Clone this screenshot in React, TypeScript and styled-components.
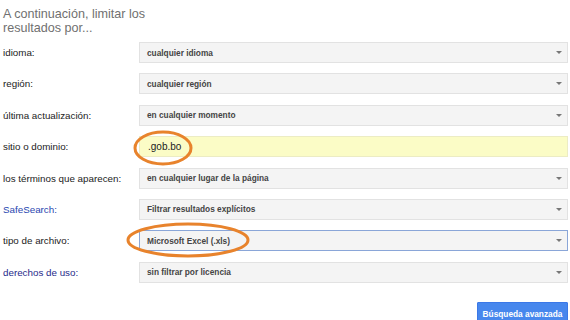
import { FC } from 'react'
import styled, { createGlobalStyle } from 'styled-components'

const GlobalStyle = createGlobalStyle`
  html, body {
    margin: 0;
    padding: 0;
    background: #fff;
    overflow: hidden;
  }
  body {
    font-family: "Liberation Sans", Arial, sans-serif;
  }
`

// Page wrapper
const Page = styled.div`
  width: 570px;
  height: 320px;
  padding: 8px 2px 0 3px;
  box-sizing: border-box;
`

const Heading = styled.h2`
  margin: 0 0 7px 0;
  width: 150px;
  font-size: 12.6px;
  line-height: 13.5px;
  font-weight: normal;
  color: #707070;
`

const Form = styled.div`
  display: grid;
  grid-template-columns: 136px 1fr;
  row-gap: 10.4px;
  align-items: center;
`

const Label = styled.div<{ $link?: boolean; $dark?: boolean }>`
  font-size: 9.8px;
  color: ${p => (p.$link ? (p.$dark ? '#1f2a8a' : '#2a47b0') : '#222')};
`

const Field = styled.div`
  position: relative;
`

const Select = styled.div<{ $focused?: boolean }>`
  height: 21px;
  box-sizing: border-box;
  display: flex;
  align-items: center;
  justify-content: space-between;
  padding: 0 5px 0 7px;
  background: #f4f4f4;
  border: 1px solid ${p => (p.$focused ? '#8aa6d8' : '#e2e2e2')};
  font-size: 8.3px;
  font-weight: bold;
  color: #444;
`

const Arrow = styled.span`
  width: 0;
  height: 0;
  border-left: 3px solid transparent;
  border-right: 3px solid transparent;
  border-top: 3px solid #777;
`

const TextInput = styled.div`
  height: 21px;
  box-sizing: border-box;
  display: flex;
  align-items: center;
  padding: 0 8px;
  background: #fbfcc6;
  border: 1px solid #ececc4;
  font-size: 10px;
  color: #222;
`

// Hand-drawn orange ring laid over a field
const Ring = styled.svg<{ $left: number; $top: number }>`
  position: absolute;
  left: ${p => p.$left}px;
  top: ${p => p.$top}px;
  overflow: visible;
  pointer-events: none;
`

const Footer = styled.div`
  display: flex;
  justify-content: flex-end;
  margin-top: 19px;
`

const Button = styled.button`
  height: 24px;
  width: 91px;
  padding: 0;
  border: 1px solid #3b78e7;
  background: #4787ed;
  color: #fff;
  font-family: "Liberation Sans", Arial, sans-serif;
  font-size: 8.3px;
  font-weight: bold;
  border-radius: 1px;
`

const Annotation: FC<{ left: number; top: number; rx: number; ry: number }> = ({ left, top, rx, ry }) => (
  <Ring $left={left} $top={top} width={rx * 2 + 4} height={ry * 2 + 4}>
    <ellipse cx={rx + 2} cy={ry + 2} rx={rx} ry={ry} fill="none" stroke="#e8832c" strokeWidth="3" />
  </Ring>
)

const rows = [
  { label: 'idioma:', value: 'cualquier idioma' },
  { label: 'región:', value: 'cualquier región' },
  { label: 'última actualización:', value: 'en cualquier momento' },
]

const rows2 = [
  { label: 'los términos que aparecen:', value: 'en cualquier lugar de la página' },
]

const App = () => {
  return (
    <Page>
      <GlobalStyle />
      <Heading>A continuación, limitar los resultados por...</Heading>
      <Form>
        {rows.map(r => (
          <>
            <Label key={r.label}>{r.label}</Label>
            <Field>
              <Select>{r.value}<Arrow /></Select>
            </Field>
          </>
        ))}
        <Label>sitio o dominio:</Label>
        <Field>
          <TextInput>.gob.bo</TextInput>
          <Annotation left={-6} top={-6} rx={28} ry={16} />
        </Field>
        {rows2.map(r => (
          <>
            <Label key={r.label}>{r.label}</Label>
            <Field>
              <Select>{r.value}<Arrow /></Select>
            </Field>
          </>
        ))}
        <Label $link>SafeSearch:</Label>
        <Field>
          <Select>Filtrar resultados explícitos<Arrow /></Select>
        </Field>
        <Label>tipo de archivo:</Label>
        <Field>
          <Select $focused>Microsoft Excel (.xls)<Arrow /></Select>
          <Annotation left={-13} top={-8} rx={60} ry={16} />
        </Field>
        <Label $link $dark>derechos de uso:</Label>
        <Field>
          <Select>sin filtrar por licencia<Arrow /></Select>
        </Field>
      </Form>
      <Footer>
        <Button>Búsqueda avanzada</Button>
      </Footer>
    </Page>
  )
}

export default App
